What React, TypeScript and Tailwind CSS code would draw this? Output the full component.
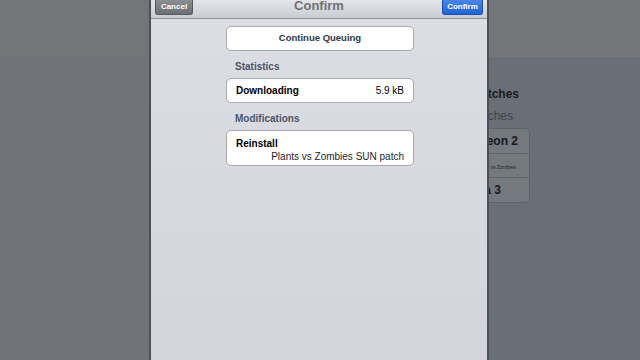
export default function App() {
  const font = { fontFamily: '"Liberation Sans", Arial, sans-serif' };
  return (
    <div className="relative w-[640px] h-[360px] overflow-hidden bg-[#71757b]" style={font}>
      {/* dimmed background page */}
      <div className="flex flex-col h-full">
        <div className="h-[57px] bg-[#737679]" />
        <div className="flex-1 flex">
          <div className="w-[440px] bg-[#70747a]" />
          <div className="flex-1 bg-[#6a6f77] flex flex-col">
            <div className="w-[90px] flex flex-col">
              <div className="h-[29px]" />
              <div className="text-right pr-[11px] text-[12px] font-bold text-[#1b1d21] leading-[16px]">Patches</div>
              <div className="h-[6px]" />
              <div className="text-right pr-[17px] text-[12px] text-[#3c424c] leading-[16px]">Patches</div>
              <div className="h-[4px]" />
              <div className="rounded-[5px] bg-[#747980] border border-[#5d6168] flex flex-col">
                <div className="h-[25px] flex items-center justify-end pr-[11px] text-[12px] font-bold text-[#15171b] border-b border-[#60646b]">Dungeon 2</div>
                <div className="h-[24px] flex items-center justify-end pr-[13px] pt-[4px] text-[5px] text-[#1d1f23] border-b border-[#60646b]">Plants vs Zombies</div>
                <div className="h-[24px] flex items-center justify-end pr-[28px] text-[12px] font-bold text-[#15171b]">Zelda 3</div>
              </div>
            </div>
          </div>
        </div>
      </div>

      {/* modal sheet */}
      <div className="absolute left-[149px] top-0 bottom-0 w-[340px] flex">
        <div className="w-[2px] bg-[#4d5056]" />
        <div className="flex-1 flex flex-col bg-gradient-to-b from-[#dcdee4] to-[#d3d4dc]">
          {/* nav bar */}
          <div className="h-[19px] shrink-0 relative flex items-start justify-between px-[4px] bg-gradient-to-b from-[#e4e5e9] to-[#c9ccd2] border-b border-[#8e9196]">
            <div className="h-[15px] w-[38px] rounded-b-[3px] bg-gradient-to-b from-[#8a8d92] to-[#6c6f74] border border-[#55585d] border-t-0 flex items-center justify-center text-[8px] font-bold text-white leading-none">Cancel</div>
            <div className="absolute inset-x-0 top-[-2px] text-center text-[13px] font-bold text-[#6e7277] leading-[16px]">Confirm</div>
            <div className="h-[15px] w-[41px] rounded-b-[3px] bg-gradient-to-b from-[#4a85e6] to-[#2262d4] border border-[#1b4fae] border-t-0 flex items-center justify-center text-[8px] font-bold text-white leading-none relative">Confirm</div>
          </div>
          {/* content */}
          <div className="flex flex-col pl-[75px] pr-[73px] pt-[7px]">
            <div className="h-[25px] rounded-[5px] bg-white border border-[#a8aaaf] flex items-center justify-center text-[9.5px] font-bold text-[#2f3746]">Continue Queuing</div>
            <div className="h-[16px] mt-[7px] flex items-center pl-[9px] text-[10px] font-bold text-[#4c556b]">Statistics</div>
            <div className="h-[25px] mt-[4px] rounded-[5px] bg-white border border-[#a8aaaf] flex items-center justify-between px-[9px] text-[10px] text-black">
              <span className="font-bold">Downloading</span>
              <span>5.9 kB</span>
            </div>
            <div className="h-[16px] mt-[7px] flex items-center pl-[9px] text-[10px] font-bold text-[#4c556b]">Modifications</div>
            <div className="h-[36px] mt-[4px] rounded-[5px] bg-white border border-[#a8aaaf] flex flex-col justify-center pt-[3px] px-[9px] text-[10px] text-black leading-[13px]">
              <span className="font-bold">Reinstall</span>
              <span className="text-right text-[#1f2530]">Plants vs Zombies SUN patch</span>
            </div>
          </div>
        </div>
        <div className="w-[2px] bg-[#4d5056]" />
      </div>
    </div>
  );
}
